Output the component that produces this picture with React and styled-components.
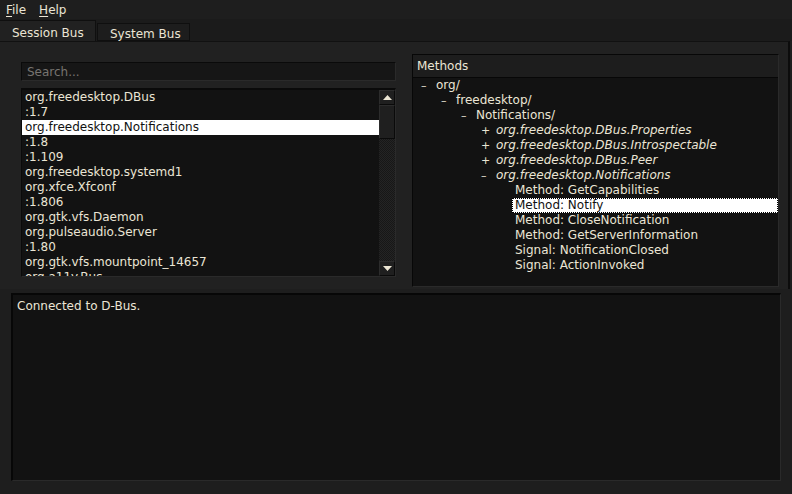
import styled, { createGlobalStyle } from "styled-components";

// D-Bus browser window: menu, bus tabs, service list + method tree, log pane

const GlobalStyle = createGlobalStyle`
  html, body {
    margin: 0;
    padding: 0;
    background: #1e1e1e;
  }
  body {
    font-family: "DejaVu Sans", "Liberation Sans", sans-serif;
    font-size: 12px;
    color: #ebe5d5;
  }
`;

const Window = styled.div`
  width: 792px;
  height: 494px;
  display: flex;
  flex-direction: column;
  background: #1e1e1e;
  overflow: hidden;
`;

const MenuBar = styled.div`
  height: 19px;
  box-sizing: border-box;
  padding: 1px 0 0 6px;
  display: flex;
  align-items: center;
  gap: 13px;
  background: #1e1e1e;
`;

const MenuItem = styled.span`
  line-height: 18px;
  & u {
    text-decoration: underline;
    text-underline-offset: 2px;
  }
`;

const TabBar = styled.div`
  height: 22px;
  display: flex;
  align-items: flex-end;
  background: #1b1b1b;
`;

const Tab = styled.div`
  height: ${(p) => (p.active ? "21px" : "18px")};
  width: ${(p) => p.width}px;
  box-sizing: border-box;
  display: flex;
  align-items: center;
  padding: 3px 0 0 12px;
  background: ${(p) => (p.active ? "#212121" : "#1d1d1d")};
  border: 1px solid #0f0f0f;
  border-bottom: ${(p) => (p.active ? "none" : "1px solid #0f0f0f")};
  border-left: ${(p) => (p.first ? "none" : "1px solid #0f0f0f")};
  margin-right: 1px;
`;

const TabPane = styled.div`
  width: 790px;
  height: 248px;
  box-sizing: border-box;
  display: flex;
  gap: 16px;
  padding: 12px 9px 2px 21px;
  background: #212121;
  border-top: 1px solid #111;
  border-right: 2px solid #0c0c0c;
`;

const LeftColumn = styled.div`
  width: 375px;
  display: flex;
  flex-direction: column;
  gap: 7px;
  padding-top: 8px;
`;

const Search = styled.div`
  height: 19px;
  box-sizing: border-box;
  padding-left: 5px;
  display: flex;
  align-items: center;
  color: #767470;
  background: #161616;
  border-top: 1px solid #0a0a0a;
  border-left: 1px solid #0a0a0a;
  border-right: 1px solid #2a2a2a;
  border-bottom: 1px solid #2a2a2a;
`;

const ListFrame = styled.div`
  height: 189px;
  box-sizing: border-box;
  display: flex;
  background: #121212;
  border-top: 2px solid #0a0a0a;
  border-left: 1px solid #0a0a0a;
  border-right: 1px solid #2a2a2a;
  border-bottom: 1px solid #2a2a2a;
  overflow: hidden;
`;

const ListBody = styled.div`
  flex: 1;
  overflow: hidden;
`;

const ListRow = styled.div`
  height: 15px;
  line-height: 15px;
  padding-left: 3px;
  white-space: nowrap;
  background: ${(p) => (p.selected ? "#ffffff" : "transparent")};
  color: ${(p) => (p.selected ? "#111" : "#ebe5d5")};
`;

const ScrollBar = styled.div`
  width: 16px;
  display: flex;
  flex-direction: column;
  background: #1b1b1b;
`;

const ScrollButton = styled.div`
  height: 15px;
  box-sizing: border-box;
  display: flex;
  align-items: center;
  justify-content: center;
  background: #1f1f1f;
  border: 1px solid #0a0a0a;
  border-top-color: #2c2c2c;
  border-left-color: #2c2c2c;
`;

const Thumb = styled.div`
  height: 34px;
  box-sizing: border-box;
  background: #1f1f1f;
  border: 1px solid #0a0a0a;
  border-top-color: #2c2c2c;
  border-left-color: #2c2c2c;
`;

const Track = styled.div`
  flex: 1;
  background-color: #1a1a1a;
  background-image: repeating-conic-gradient(#242424 0 25%, #171717 0 50%);
  background-size: 2px 2px;
`;

const TreePanel = styled.div`
  flex: 1;
  display: flex;
  flex-direction: column;
  background: #121212;
  border: 1px solid #070707;
  border-right-color: #2a2a2a;
  border-bottom-color: #2a2a2a;
`;

const TreeHeader = styled.div`
  height: 22px;
  flex-shrink: 0;
  display: flex;
  align-items: center;
  padding-left: 4px;
  background: #1d1d1d;
  border-bottom: 1px solid #070707;
`;

const TreeRow = styled.div`
  height: 15px;
  display: flex;
  align-items: center;
  padding-left: ${(p) => 8 + p.depth * 20}px;
  white-space: nowrap;
`;

const Expander = styled.span`
  width: 14px;
  flex-shrink: 0;
  font-size: 11px;
  line-height: 15px;
  color: #ebe5d5;
`;

const TreeLabel = styled.span`
  height: 15px;
  line-height: 13px;
  box-sizing: border-box;
  padding-left: ${(p) => (p.leaf ? "2px" : "0")};
  margin-left: ${(p) => (p.leaf ? "-3px" : "0")};
  font-style: ${(p) => (p.italic ? "italic" : "normal")};
  flex: ${(p) => (p.selected ? "1" : "0 0 auto")};
  background: ${(p) => (p.selected ? "#ffffff" : "transparent")};
  color: ${(p) => (p.selected ? "#111" : "#ebe5d5")};
  border: 1px ${(p) => (p.selected ? "dotted #000" : "solid transparent")};
`;

const Splitter = styled.div`
  height: 4px;
  flex-shrink: 0;
  background: #1e1e1e;
`;

const LogPane = styled.div`
  flex: 1;
  margin: 0 11px 13px 11px;
  padding: 4px 4px;
  background: #121212;
  border-top: 2px solid #070707;
  border-left: 2px solid #070707;
  border-right: 1px solid #2a2a2a;
  border-bottom: 1px solid #2a2a2a;
  line-height: 14px;
`;

const Arrow = ({ up }) => (
  <svg width="9" height="5" viewBox="0 0 9 5">
    <polygon
      points={up ? "0,5 9,5 4.5,0" : "0,0 9,0 4.5,5"}
      fill="#ece6d4"
    />
  </svg>
);

const services = [
  "org.freedesktop.DBus",
  ":1.7",
  "org.freedesktop.Notifications",
  ":1.8",
  ":1.109",
  "org.freedesktop.systemd1",
  "org.xfce.Xfconf",
  ":1.806",
  "org.gtk.vfs.Daemon",
  "org.pulseaudio.Server",
  ":1.80",
  "org.gtk.vfs.mountpoint_14657",
  "org.a11y.Bus",
];

const tree = [
  { depth: 0, sign: "–", text: "org/" },
  { depth: 1, sign: "–", text: "freedesktop/" },
  { depth: 2, sign: "–", text: "Notifications/" },
  { depth: 3, sign: "+", text: "org.freedesktop.DBus.Properties", italic: true },
  { depth: 3, sign: "+", text: "org.freedesktop.DBus.Introspectable", italic: true },
  { depth: 3, sign: "+", text: "org.freedesktop.DBus.Peer", italic: true },
  { depth: 3, sign: "–", text: "org.freedesktop.Notifications", italic: true },
  { depth: 4, text: "Method: GetCapabilities" },
  { depth: 4, text: "Method: Notify", selected: true },
  { depth: 4, text: "Method: CloseNotification" },
  { depth: 4, text: "Method: GetServerInformation" },
  { depth: 4, text: "Signal: NotificationClosed" },
  { depth: 4, text: "Signal: ActionInvoked" },
];

export default function App() {
  return (
    <Window>
      <GlobalStyle />
      <MenuBar>
        <MenuItem>
          <u>F</u>ile
        </MenuItem>
        <MenuItem>
          <u>H</u>elp
        </MenuItem>
      </MenuBar>

      <TabBar>
        <Tab active first width={96}>
          Session Bus
        </Tab>
        <Tab width={93}>System Bus</Tab>
      </TabBar>

      <TabPane>
        <LeftColumn>
          <Search>Search...</Search>
          <ListFrame>
            <ListBody>
              {services.map((name, i) => (
                <ListRow key={name} selected={i === 2}>
                  {name}
                </ListRow>
              ))}
            </ListBody>
            <ScrollBar>
              <ScrollButton>
                <Arrow up />
              </ScrollButton>
              <Thumb />
              <Track />
              <ScrollButton>
                <Arrow />
              </ScrollButton>
            </ScrollBar>
          </ListFrame>
        </LeftColumn>

        <TreePanel>
          <TreeHeader>Methods</TreeHeader>
          {tree.map((node) => (
            <TreeRow key={node.text} depth={node.depth}>
              <Expander>{node.sign || ""}</Expander>
              <TreeLabel
                italic={node.italic}
                leaf={!node.sign}
                selected={node.selected}
              >
                {node.text}
              </TreeLabel>
            </TreeRow>
          ))}
        </TreePanel>
      </TabPane>

      <Splitter />
      <LogPane>Connected to D-Bus.</LogPane>
    </Window>
  );
}
